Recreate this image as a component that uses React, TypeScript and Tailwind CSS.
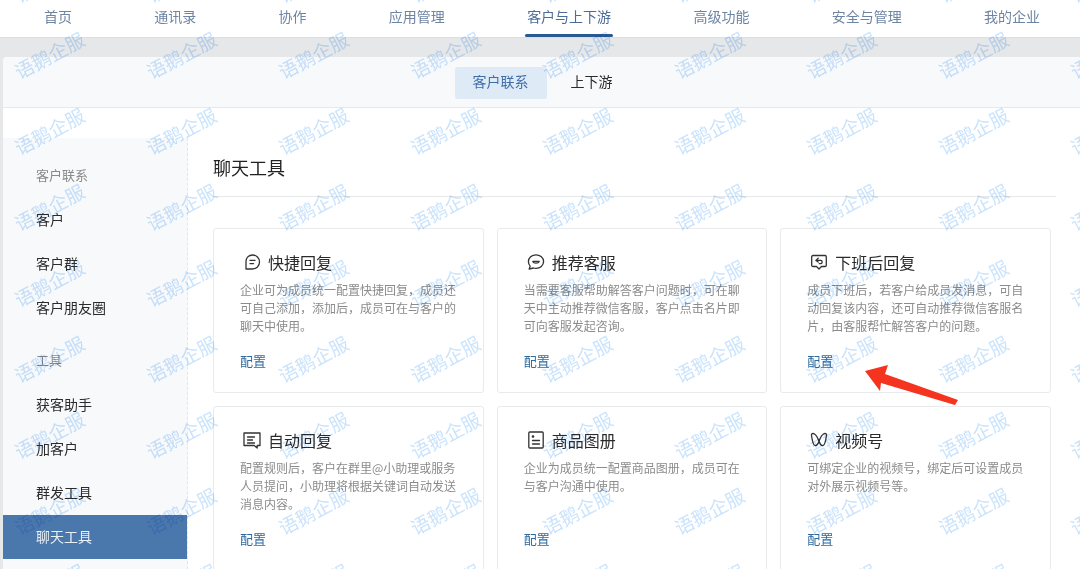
const tabs = ["首页", "通讯录", "协作", "应用管理", "客户与上下游", "高级功能", "安全与管理", "我的企业"];

const ic = { fill: "none", stroke: "#333", strokeWidth: 1.3, strokeLinecap: "round" as const, strokeLinejoin: "round" as const };

const icons: Record<string, React.ReactNode> = {
  quick: (
    <svg width="18" height="18" viewBox="0 0 18 18" {...ic}>
      <path d="M9.500 2C5.600 2 3 4.800 3 8.400V16h6.500C13.400 16 16.500 13 16.500 9S13.400 2 9.500 2Z" />
      <path d="M7 7.400h5M7 10.600h3.500" />
    </svg>
  ),
  service: (
    <svg width="18" height="18" viewBox="0 0 18 18" {...ic}>
      <path d="M9 1.800c4.200 0 7.600 3 7.600 6.800s-3.400 6.800-7.600 6.800c-.9 0-1.800-.1-2.600-.4L2.200 16l1-2.900C2 11.900 1.400 10.300 1.400 8.600 1.400 4.800 4.800 1.800 9 1.800Z" />
      <path d="M5.800 8.400c.9 2.200 5.500 2.200 6.400 0Z" />
    </svg>
  ),
  after: (
    <svg width="18" height="18" viewBox="0 0 18 18" {...ic}>
      <path d="M3 2.500h12c.8 0 1.300.5 1.300 1.300v8.400c0 .8-.5 1.300-1.300 1.300h-3.500L9 16l-2.500-2.500H3c-.8 0-1.300-.5-1.300-1.300V3.800c0-.8.5-1.300 1.300-1.300Z" />
      <path d="M8.200 5.200 5.900 7.400l2.300 1.700M6 7.400h4.800c1.800 0 1.800 3.300 0 3.300H9.300" />
    </svg>
  ),
  auto: (
    <svg width="18" height="18" viewBox="0 0 18 18" {...ic}>
      <path d="M1 2h16v12.500h-2.800V17l-3-2.500H1Z" />
      <path d="M4.500 6h7M4.500 9h5M4.500 12h7" />
    </svg>
  ),
  album: (
    <svg width="18" height="18" viewBox="0 0 18 18" {...ic}>
      <rect x="1.800" y="1" width="14.400" height="16" rx="1" />
      <circle cx="6" cy="5.500" r=".7" fill="#333" />
      <path d="M5.500 9.500h7M5.500 13h7" />
    </svg>
  ),
  channel: (
    <svg width="18" height="18" viewBox="0 0 18 18" {...ic}>
      <path d="M1.500 4.500c-.5-2 1.500-2.500 3-1.500 2 1.300 3.500 4.500 4.500 7.500-1.200 3-2.800 4.500-4.200 4-1.700-.6-2.800-6.500-3.300-10Z" />
      <path d="M16.500 4.500c.5-2-1.500-2.500-3-1.500-2 1.300-3.500 4.500-4.500 7.500 1.200 3 2.800 4.500 4.200 4 1.700-.6 2.800-6.500 3.300-10Z" />
    </svg>
  ),
};

const cards = [
  { icon: "quick", title: "快捷回复", desc: "企业可为成员统一配置快捷回复，成员还\n可自己添加，添加后，成员可在与客户的\n聊天中使用。" },
  { icon: "service", title: "推荐客服", desc: "当需要客服帮助解答客户问题时，可在聊\n天中主动推荐微信客服，客户点击名片即\n可向客服发起咨询。" },
  { icon: "after", title: "下班后回复", desc: "成员下班后，若客户给成员发消息，可自\n动回复该内容，还可自动推荐微信客服名\n片，由客服帮忙解答客户的问题。" },
  { icon: "auto", title: "自动回复", desc: "配置规则后，客户在群里@小助理或服务\n人员提问，小助理将根据关键词自动发送\n消息内容。" },
  { icon: "album", title: "商品图册", desc: "企业为成员统一配置商品图册，成员可在\n与客户沟通中使用。" },
  { icon: "channel", title: "视频号", desc: "可绑定企业的视频号，绑定后可设置成员\n对外展示视频号等。" },
];

function SideLabel({ children }: { children: string }) {
  return <div className="h-[44px] pl-[33px] pb-[2px] flex items-center text-[13px] text-[#8a8a8a]">{children}</div>;
}

function SideItem({ children, active, low }: { children: string; active?: boolean; low?: boolean }) {
  const base = low ? "h-[44px] pl-[33px] pb-[1px] flex items-center text-[14px]" : "h-[44px] pl-[33px] pb-[2px] flex items-center text-[14px]";
  return <div className={active ? `${base} bg-[#4a78ad] text-[#e9eff6]` : `${base} text-[#2b2b2b]`}>{children}</div>;
}

export default function App() {
  return (
    <div className="relative w-[1080px] h-[569px] overflow-hidden bg-[#e6e7e9] font-['Noto_Sans_CJK_SC','Noto_Sans',sans-serif]">
      <nav className="h-[38px] bg-white border-b border-[#dcdee0] flex justify-between pl-[44px] pr-[40px]">
        {tabs.map((t, i) => (
          <div key={t} className={i === 4 ? "relative h-[37px] pb-[4px] flex items-center text-[14px] text-[#4b6c96]" : "h-[37px] pb-[4px] flex items-center text-[14px] text-[#6d84a3]"}>
            {t}
            {i === 4 && <span className="absolute -left-[2px] -right-[2px] bottom-0 h-[3px] rounded-sm bg-[#2a5a94]" />}
          </div>
        ))}
      </nav>

      <div className="mt-[19px] ml-[3px] h-[512px] bg-white rounded-tl-[4px] flex flex-col">
        <div className="h-[51px] shrink-0 bg-[#f8f9fb] border-b border-[#e7e8ea] flex justify-center items-start pt-[10px] pr-[3px] gap-[24px] rounded-tl-[4px]">
          <div className="ml-[-13px] w-[92px] h-[32px] pb-[3px] rounded-[3px] bg-[#dfeaf7] text-[#3e6ea8] text-[14px] flex items-center justify-center">客户联系</div>
          <div className="h-[32px] pb-[3px] text-[14px] text-[#2b2b2b] flex items-center">上下游</div>
        </div>

        <div className="flex flex-1 min-h-0 pt-[30px]">
          <aside className="w-[185px] shrink-0 bg-[#f8f9fb] border-r border-dashed border-[#e4e5e8] pt-[16px]">
            <SideLabel>客户联系</SideLabel>
            <SideItem>客户</SideItem>
            <SideItem>客户群</SideItem>
            <SideItem>客户朋友圈</SideItem>
            <div className="h-[9px]" />
            <SideLabel>工具</SideLabel>
            <SideItem low>获客助手</SideItem>
            <SideItem low>加客户</SideItem>
            <SideItem low>群发工具</SideItem>
            <SideItem low active>聊天工具</SideItem>
          </aside>

          <main className="flex-1 min-w-0 pl-[25px] pr-[24px]">
            <div className="h-[59px] border-b border-[#e7e8ea] flex items-start">
              <h1 className="text-[18px] leading-[60px] -mt-[1px] text-[#222] font-normal">聊天工具</h1>
            </div>
            <div className="mt-[31px] mr-[5px] grid grid-cols-3 gap-[13px]">
              {cards.map((c) => (
                <div key={c.title} className="h-[165px] border border-[#e9eaec] rounded-[3px] bg-white pl-[26px] pt-[21px]">
                  <div className="h-[24px] flex items-center gap-[7px] pl-[3px]">
                    {icons[c.icon]}
                    <span className="text-[16px] text-[#2b2b2b]">{c.title}</span>
                  </div>
                  <p className="mt-[7px] h-[54px] text-[12px] leading-[18px] text-[#8b8b8b] whitespace-pre-line">{c.desc}</p>
                  <div className="mt-[16px] text-[13px] leading-[20px] text-[#2f6a9e]">配置</div>
                </div>
              ))}
            </div>
          </main>
        </div>
      </div>

      <svg className="absolute left-[860px] top-[360px] pointer-events-none" width="105" height="50" viewBox="860 360 105 50">
        <path d="M865 371 888 365 885 374 958 400 955 405 881 383 880 391Z" fill="#f5341f" />
      </svg>

      <div className="absolute -left-[17px] -top-[60px] grid grid-cols-[repeat(9,132px)] auto-rows-[76px] pointer-events-none select-none mix-blend-multiply">
        {Array.from({ length: 90 }).map((_, i) => (
          <div key={i} className="flex items-center justify-center">
            <span className="text-[19px] leading-none whitespace-nowrap text-[#b4d8fb] opacity-70 -rotate-[28deg]">语鹅企服</span>
          </div>
        ))}
      </div>
    </div>
  );
}
